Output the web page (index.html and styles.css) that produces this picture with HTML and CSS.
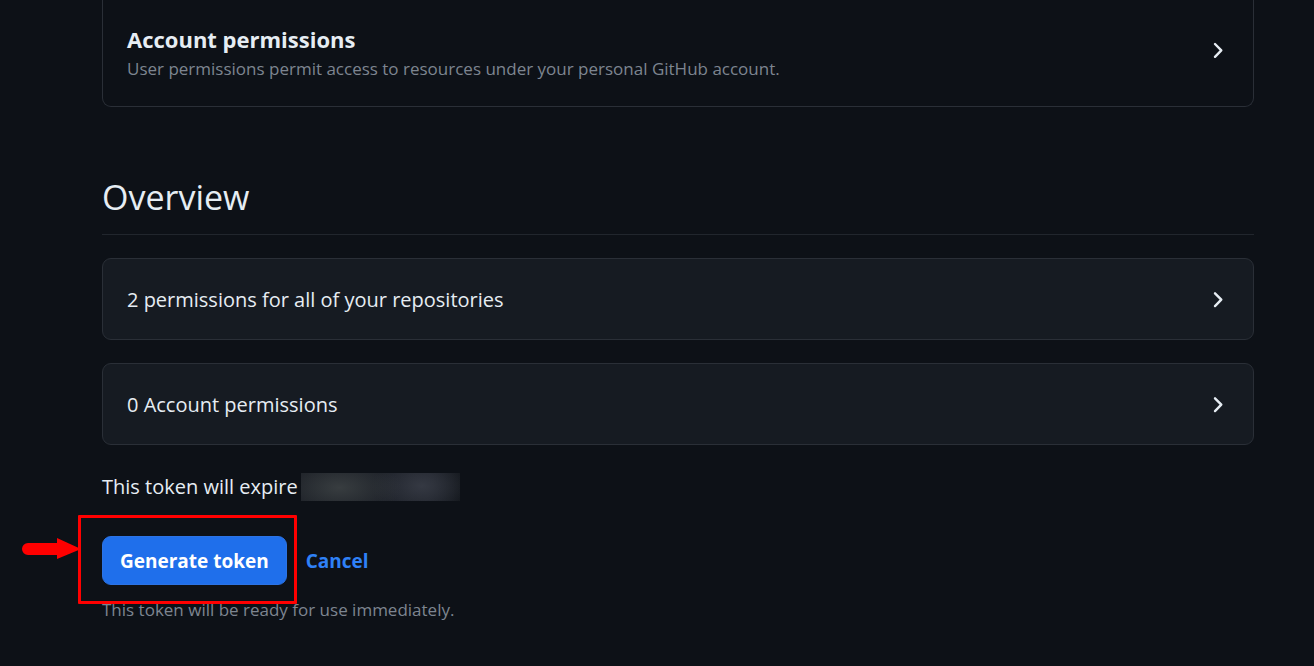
FILE: index.html
```html
<!DOCTYPE html>
<html lang="en">
<head>
<meta charset="utf-8">
<meta name="viewport" content="width=device-width, initial-scale=1">
<title>New fine-grained personal access token</title>
<link rel="stylesheet" href="styles.css">
</head>
<body>
<main class="page">
  <button type="button" class="card card-open">
    <span class="card-text">
      <span class="card-title">Account permissions</span>
      <span class="card-note">User permissions permit access to resources under your personal GitHub account.</span>
    </span>
    <svg class="chevron" viewBox="0 0 24 24" aria-hidden="true"><path d="M10 6 16.300 12.400 10 18.800"/></svg>
  </button>

  <section class="overview">
    <h2 class="heading">Overview</h2>
    <button type="button" class="card card-row">
      <span>2 permissions for all of your repositories</span>
      <svg class="chevron" viewBox="0 0 24 24" aria-hidden="true"><path d="M10 5.300 16.300 11.700 10 18.100"/></svg>
    </button>
    <button type="button" class="card card-row">
      <span>0 Account permissions</span>
      <svg class="chevron" viewBox="0 0 24 24" aria-hidden="true"><path d="M10 5.300 16.300 11.700 10 18.100"/></svg>
    </button>
  </section>

  <p class="expiry">This token will expire <span class="redacted"></span></p>

  <div class="actions">
    <div class="submit">
      <button type="button" class="primary">Generate token</button>
      <span class="highlight"></span>
      <svg class="arrow" viewBox="0 0 60 22" aria-hidden="true"><path d="M7 5h29V0l24 11-24 10v-4H7A6 6 0 0 1 7 5z"/></svg>
    </div>
    <a class="cancel" href="#">Cancel</a>
  </div>
  <p class="hint">This token will be ready for use immediately.</p>
</main>
</body>
</html>
```

FILE: styles.css
```css
* { box-sizing: border-box; }

body {
  margin: 0;
  background: #0d1117;
  color: #e6edf3;
  font-family: "Open Sans", "Noto Sans", sans-serif;
  font-size: 20px;
  line-height: 30px;
}

.page { padding: 0 60px 24px 102px; }

.card {
  display: flex;
  align-items: center;
  justify-content: space-between;
  width: 100%;
  padding: 24px;
  border: 1px solid #2a2f37;
  border-radius: 9px;
  background: #161b22;
  color: inherit;
  font: inherit;
  text-align: left;
  cursor: pointer;
}

.card-open {
  align-items: flex-start;
  padding-bottom: 22px;
  border-top: 0;
  border-radius: 0 0 9px 9px;
  background: transparent;
}

.card-text { display: flex; flex-direction: column; }
.card-title { font-size: 22px; font-weight: 700; }
.card-note { color: #7d8590; font-size: 17px; }

.chevron {
  flex: none;
  width: 24px;
  height: 24px;
  fill: none;
  stroke: #e6edf3;
  stroke-width: 2.4;
  stroke-linecap: round;
  stroke-linejoin: round;
}

.card-open .chevron { margin-top: 14px; }

.overview {
  display: flex;
  flex-direction: column;
  gap: 23px;
  margin-top: 65px;
}

.heading {
  margin: 0;
  padding-bottom: 12px;
  border-bottom: 1px solid #21262d;
  font-size: 34px;
  font-weight: 400;
  line-height: 50px;
}

.card-row {
  min-height: 82px;
  padding-top: 26px;
}

.expiry {
  display: flex;
  align-items: center;
  gap: 3px;
  margin: 24px 0 0;
  line-height: 36px;
}

.redacted {
  width: 159px;
  height: 28px;
  background:
    radial-gradient(ellipse 62px 30px at 24% 52%, #383d40, transparent),
    radial-gradient(ellipse 50px 30px at 76% 46%, #353943, transparent),
    linear-gradient(90deg, #1a1e25, #1d2129 80%, #12161b);
}

.actions {
  display: flex;
  align-items: center;
  gap: 19px;
  margin-top: 31px;
}

.submit { position: relative; }

.primary {
  height: 49px;
  padding: 0 17px;
  border: 1px solid #2c73e4;
  border-radius: 9px;
  background: #1f6feb;
  color: #fff;
  font: inherit;
  font-size: 19px;
  font-weight: 700;
  cursor: pointer;
}

.highlight {
  position: absolute;
  inset: -21px -10px -19px -24px;
  border: 3px solid #f00;
  border-radius: 1px;
  pointer-events: none;
}

.arrow {
  position: absolute;
  top: 2px;
  left: -81px;
  width: 60px;
  height: 22px;
  fill: #f00;
}

.cancel {
  color: #2f81f7;
  font-size: 19px;
  font-weight: 700;
  text-decoration: none;
}

.hint { margin: 10px 0 0; color: #7d8590; font-size: 17px; }
```
